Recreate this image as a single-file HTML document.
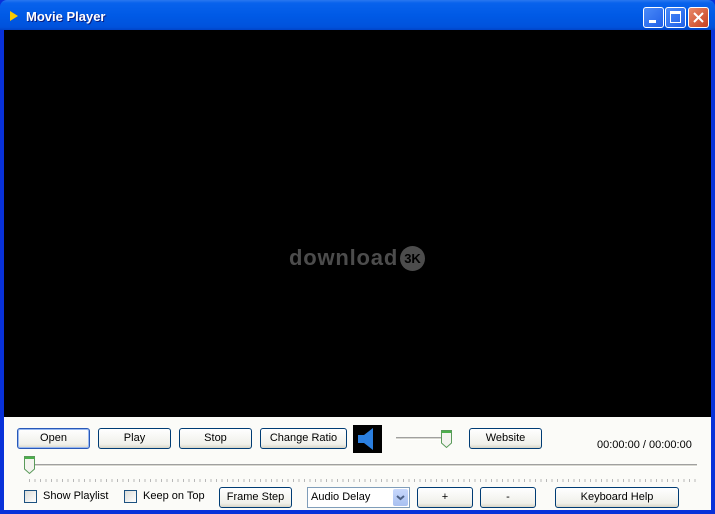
<!DOCTYPE html><html><head><style>
*{margin:0;padding:0;box-sizing:border-box}
body{width:715px;height:514px;overflow:hidden;font-family:"Liberation Sans",sans-serif;font-size:11px;position:relative;background:#0831d9}
.tb{position:absolute;left:0;top:0;width:715px;height:30px;background:linear-gradient(#2a78f0,#0862ec 10%,#005ae6 50%,#0052dc 90%,#0044c8);border-radius:7px 7px 0 0}
.title{position:absolute;left:26px;top:9px;color:#fff;font-weight:bold;font-size:13px;text-shadow:1px 1px #0a1e80}
.wb{position:absolute;top:7px;width:21px;height:21px;border:1px solid #fff;border-radius:3px;background:linear-gradient(135deg,#4a8af8,#2060e8)}
.black{position:absolute;left:4px;top:30px;width:707px;height:387px;background:#000}
.panel{position:absolute;left:4px;top:417px;width:707px;height:93px;background:#fbfbf8}
.btn{position:absolute;height:21px;border:1px solid #003c74;border-radius:3px;background:linear-gradient(#fff,#f0f0ea 80%,#d8d5c8);text-align:center;line-height:19px;color:#000;font-size:11px}
.cb{position:absolute;width:13px;height:13px;border:1px solid #1c5180;background:linear-gradient(135deg,#dcdcd7,#fff)}
.lbl{position:absolute;font-size:11px;color:#000}
</style></head><body>
<div class="tb"></div>
<svg style="position:absolute;left:9px;top:10px" width="10" height="12"><path d="M1 1L9 6L1 11Z" fill="#f8c800"/></svg>
<div class="title">Movie Player</div>
<div class="wb" style="left:643px"><div style="position:absolute;left:5px;top:12px;width:7px;height:3px;background:#fff"></div></div>
<div class="wb" style="left:665px"><div style="position:absolute;left:4px;top:3px;width:11px;height:12px;border:1px solid #fff;border-top-width:3px"></div></div>
<div class="wb" style="left:688px;background:linear-gradient(135deg,#e88a6a,#c84020)"><svg width="19" height="19"><path d="M5 5L14 14M14 5L5 14" stroke="#fff" stroke-width="2"/></svg></div>
<div class="black"></div>
<div style="position:absolute;left:289px;top:245px;color:#4c4c4c;font-weight:bold;font-size:22px;letter-spacing:0.8px;font-family:'Liberation Sans',sans-serif">download</div>
<div style="position:absolute;left:400px;top:246px;width:25px;height:25px;border-radius:50%;background:#4c4c4c;color:#000;font-weight:bold;font-size:13px;line-height:25px;text-align:center">3K</div>
<div class="panel"></div>
<div class="btn" style="left:17px;top:428px;width:73px;border-color:#2858b8;box-shadow:inset 0 0 0 1px #98b8f0">Open</div>
<div class="btn" style="left:98px;top:428px;width:73px">Play</div>
<div class="btn" style="left:179px;top:428px;width:73px">Stop</div>
<div class="btn" style="left:260px;top:428px;width:87px">Change Ratio</div>
<div style="position:absolute;left:353px;top:425px;width:29px;height:28px;background:#000"></div>
<svg style="position:absolute;left:353px;top:425px" width="29" height="28"><path d="M5 10H11L20 3V25L11 18H5Z" fill="#2b7fe0"/></svg>
<div style="position:absolute;left:396px;top:437px;width:52px;height:3px;border-top:1px solid #a0a0a0;border-bottom:1px solid #fff;background:#d8d8d0"></div>
<svg style="position:absolute;left:440px;top:429px" width="13" height="20"><path d="M1.5 1.5H11.5V14L6.5 18.5L1.5 14Z" fill="#f4f4f0" stroke="#5a9a5a"/><rect x="2" y="2" width="9" height="2" fill="#4cb04c"/></svg>
<div class="btn" style="left:469px;top:428px;width:73px">Website</div>
<div class="lbl" style="left:597px;top:439px">00:00:00 / 00:00:00</div>
<div style="position:absolute;left:29px;top:464px;width:668px;height:3px;border-top:1px solid #a0a0a0;border-bottom:1px solid #fff;background:#d8d8d0"></div>
<svg style="position:absolute;left:23px;top:455px" width="13" height="20"><path d="M1.5 1.5H11.5V14L6.5 18.5L1.5 14Z" fill="#f4f4f0" stroke="#5a9a5a"/><rect x="2" y="2" width="9" height="2" fill="#4cb04c"/></svg>
<div style="position:absolute;left:29px;top:479px;width:668px;height:3px;background:repeating-linear-gradient(90deg,#b8b8b8 0 1px,transparent 1px 5.5px)"></div>
<div class="cb" style="left:24px;top:490px"></div><div class="lbl" style="left:43px;top:490px">Show Playlist</div>
<div class="cb" style="left:124px;top:490px"></div><div class="lbl" style="left:143px;top:490px">Keep on Top</div>
<div class="btn" style="left:219px;top:487px;width:73px">Frame Step</div>
<div style="position:absolute;left:307px;top:487px;width:103px;height:21px;border:1px solid #7f9db9;background:#fff"><span class="lbl" style="left:3px;top:3px">Audio Delay</span><div style="position:absolute;right:1px;top:1px;width:15px;height:17px;background:linear-gradient(#c8d8fc,#a8c0f0);border-radius:2px"><svg width="15" height="17"><path d="M4 7L7.5 10L11 7" stroke="#4d6185" stroke-width="2" fill="none"/></svg></div></div>
<div class="btn" style="left:417px;top:487px;width:56px">+</div>
<div class="btn" style="left:480px;top:487px;width:56px">-</div>
<div class="btn" style="left:555px;top:487px;width:124px">Keyboard Help</div>
</body></html>
